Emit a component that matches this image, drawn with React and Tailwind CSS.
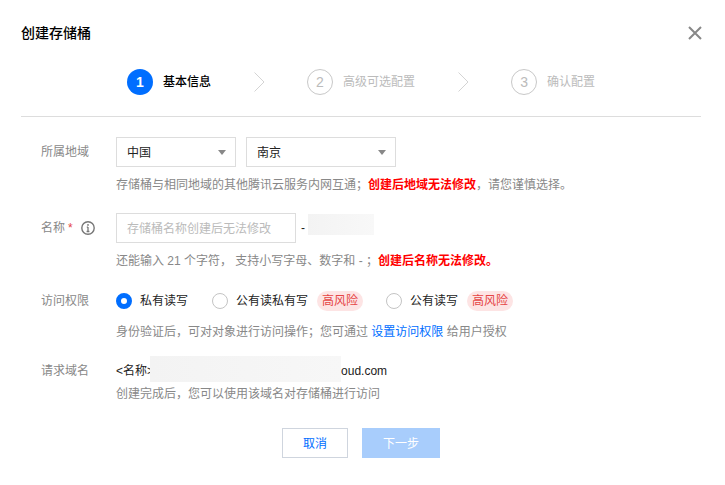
import React from "react";

const Step = ({ n, label, active }) => (
  <div className="flex items-center gap-[10px]">
    <span
      className={`w-[26px] h-[26px] rounded-full flex items-center justify-center text-[14px] ${
        active ? "bg-[#006eff] text-white font-bold" : "border border-[#c8c8c8] text-[#bbbbbb]"
      }`}
    >
      {n}
    </span>
    <span className={`text-[12px] ${active ? "text-black font-medium" : "text-[#bbbbbb]"}`}>{label}</span>
  </div>
);

const Chevron = () => (
  <svg width="11" height="20" viewBox="0 0 11 20" fill="none" className="shrink-0">
    <path d="M0.5 0.5l9.5 9.5-9.5 9.5" stroke="#d4d4d4" strokeWidth="1" />
  </svg>
);

const Select = ({ value, width }) => (
  <div className={`h-[30px] ${width} border border-[#dddddd] bg-white flex items-center justify-between pl-[10px] pr-[9px] text-[12px] text-[#222]`}>
    <span className="pt-px">{value}</span>
    <span className="w-0 h-0 border-l-[4px] border-r-[4px] border-t-[5px] border-l-transparent border-r-transparent border-t-[#888888]" />
  </div>
);

const Radio = ({ checked, label, risk }) => (
  <div className="flex items-center">
    <span
      className={`w-4 h-4 rounded-full bg-white ${checked ? "border-[5px] border-[#006eff]" : "border border-[#c4c4c4]"}`}
    />
    <span className="ml-[8px] text-[12px] text-[#222]">{label}</span>
    {risk && (
      <span className="ml-[9px] h-[20px] px-[5px] rounded-[10px] bg-[#fde4e4] text-[#e54545] text-[12px] leading-[20px]">
        高风险
      </span>
    )}
  </div>
);

const Hint = ({ children, className = "" }) => (
  <div className={`text-[12px] leading-[18px] text-[#888888] ${className}`}>{children}</div>
);

const Label = ({ children }) => (
  <div className="w-[95px] shrink-0 pl-[20px] text-[12px] text-[#888888] flex items-center">{children}</div>
);

export default function App() {
  return (
    <div className="w-[725px] h-[485px] bg-white overflow-hidden pt-[24px] pr-[24px] pl-[21px] font-['Liberation_Sans','Noto_Sans_CJK_SC',sans-serif]">
      <div className="flex items-center justify-between h-[18px]">
        <h1 className="text-[14px] font-medium text-black">创建存储桶</h1>
        <svg width="14" height="14" viewBox="0 0 14 14" fill="none" className="mr-[-1px]">
          <path d="M1 1l12 12M13 1L1 13" stroke="#888888" strokeWidth="2" />
        </svg>
      </div>

      <div className="flex items-center mt-[27px] pl-[106px] h-[26px]">
        <Step n="1" label="基本信息" active />
        <div className="ml-[43px] mr-[42px]"><Chevron /></div>
        <Step n="2" label="高级可选配置" />
        <div className="ml-[43px] mr-[42px]"><Chevron /></div>
        <Step n="3" label="确认配置" />
      </div>

      <div className="mt-[21px] w-[680px] border-b border-[#dddddd]" />

      <div className="mt-[20px] flex">
        <Label><span className="h-[30px] leading-[30px]">所属地域</span></Label>
        <div className="flex gap-[10px]">
          <Select value="中国" width="w-[120px]" />
          <Select value="南京" width="w-[150px]" />
        </div>
      </div>
      <Hint className="ml-[95px] mt-[9px]">
        存储桶与相同地域的其他腾讯云服务内网互通；<span className="text-[#ff0000] font-bold">创建后地域无法修改</span>，请您谨慎选择。
      </Hint>

      <div className="mt-[19px] flex">
        <Label>
          名称<span className="text-[#e54545] ml-[3px]">*</span>
          <svg width="14" height="14" viewBox="0 0 14 14" fill="none" className="ml-[8px]">
            <circle cx="7" cy="7" r="6.2" stroke="#777777" strokeWidth="1.4" />
            <path d="M7 6v4.5M5.8 6.2H7M5.6 10.5h2.8" stroke="#777777" strokeWidth="1.3" />
            <circle cx="7" cy="3.9" r="0.9" fill="#777777" />
          </svg>
        </Label>
        <div className="w-[180px] h-[30px] border border-[#dddddd] flex items-center pl-[10px] pt-px text-[12px] text-[#bbbbbb]">
          存储桶名称创建后无法修改
        </div>
        <span className="ml-[5px] text-[12px] leading-[30px] text-[#222]">-</span>
        <div className="ml-[3px] w-[66px] h-[21px] mt-[1px] bg-gradient-to-r from-[#f3f3f3] to-[#f8f8f8]" />
      </div>
      <Hint className="ml-[95px] mt-[9px]">
        还能输入 21 个字符， 支持小写字母、数字和 - ；<span className="text-[#ff0000] font-bold">创建后名称无法修改。</span>
      </Hint>

      <div className="mt-[21px] flex items-center h-[20px]">
        <Label>访问权限</Label>
        <div className="flex items-center">
          <Radio checked label="私有读写" />
          <div className="ml-[24px]"><Radio label="公有读私有写" risk /></div>
          <div className="ml-[23px]"><Radio label="公有读写" risk /></div>
        </div>
      </div>
      <Hint className="ml-[95px] mt-[12px]">
        身份验证后，可对对象进行访问操作；您可通过 <span className="text-[#006eff]">设置访问权限</span> 给用户授权
      </Hint>

      <div className="mt-[15px] flex h-[26px]">
        <Label><span className="pt-[3px]">请求域名</span></Label>
        <div className="flex items-center text-[12px] text-[#222]">
          <span className="whitespace-nowrap pt-[3px]">&lt;名称&gt;</span>
          <div className="relative -ml-[4px] w-[191px] h-[26px] bg-gradient-to-r from-[#f3f3f3] to-[#f7f7f7]" />
          <span className="pt-[3px]">oud.com</span>
        </div>
      </div>
      <Hint className="ml-[95px] mt-[3px]">创建完成后，您可以使用该域名对存储桶进行访问</Hint>

      <div className="mt-[25px] flex justify-center gap-[14px]">
        <button className="w-[66px] h-[30px] border border-[#cfd5de] bg-white pt-px text-[#006eff] text-[12px]">取消</button>
        <button className="w-[78px] h-[30px] bg-[#a8cdfc] pt-px text-white text-[12px]">下一步</button>
      </div>
    </div>
  );
}
